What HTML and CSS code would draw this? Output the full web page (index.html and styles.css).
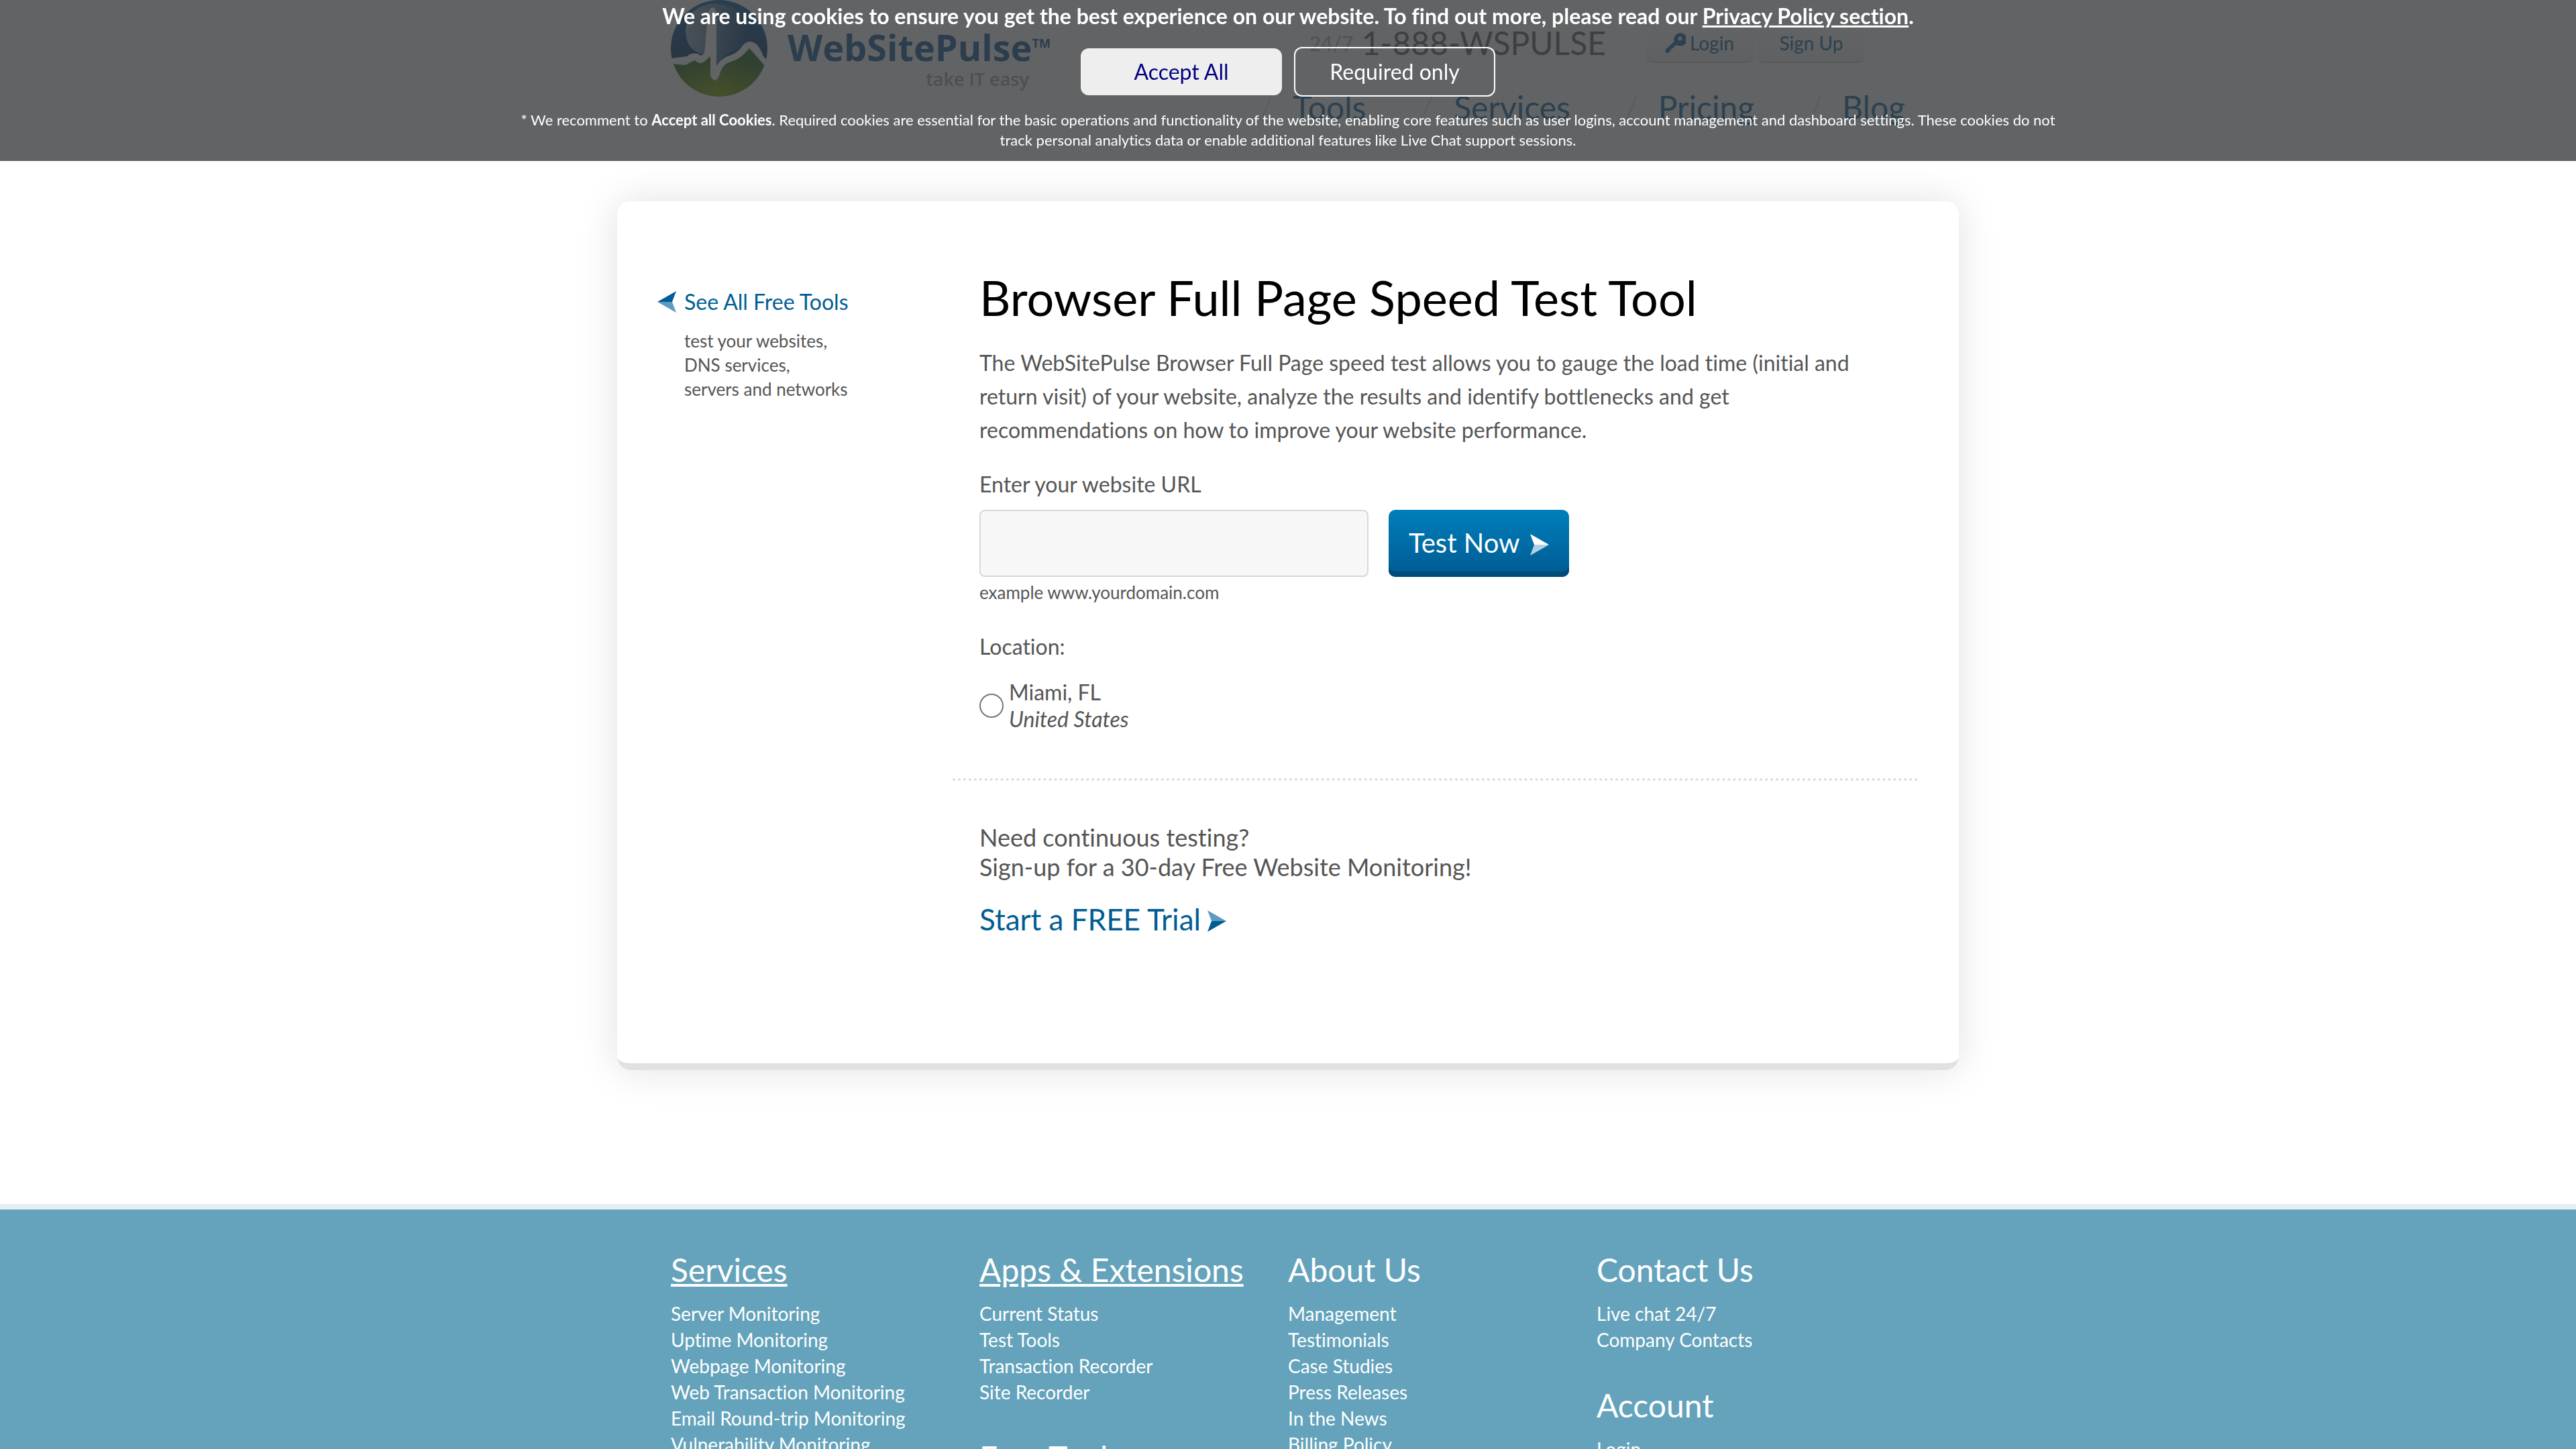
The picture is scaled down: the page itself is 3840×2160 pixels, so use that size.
FILE: index.html
```html
<!DOCTYPE html>
<html lang="en">
<head>
<meta charset="utf-8">
<title>Browser Full Page Speed Test Tool</title>
<link rel="stylesheet" href="styles.css">
</head>
<body>
<aside class="cookies" aria-label="Cookie notice">
  <p class="cookies-lead">We are using cookies to ensure you get the best experience on our website. To find out more, please read our <a href="#privacy">Privacy Policy section</a>.</p>
  <div class="cookies-actions">
    <button class="btn-accept" type="button">Accept All</button>
    <button class="btn-required" type="button">Required only</button>
  </div>
  <p class="cookies-note">* We recomment to <b>Accept all Cookies</b>. Required cookies are essential for the basic operations and functionality of the website, enabling core features such as user logins, account management and dashboard settings. These cookies do not track personal analytics data or enable additional features like Live Chat support sessions.</p>
</aside>

<header class="site-header">
  <a class="logo" href="#home">
    <svg class="logo-mark" viewBox="0 0 144 144" aria-hidden="true">
      <defs>
        <linearGradient id="sky" x1="0" y1="0" x2="0" y2="1"><stop offset="0" stop-color="#0a65a8"/><stop offset="1" stop-color="#0f3566"/></linearGradient>
        <linearGradient id="shine" x1="0" y1="0.1" x2="1" y2="0.3"><stop offset="0" stop-color="#a9bccb"/><stop offset="1" stop-color="#104c80"/></linearGradient>
        <radialGradient id="grass" cx="0.5" cy="0.9" r="0.7"><stop offset="0" stop-color="#84a800"/><stop offset="1" stop-color="#2c6a20"/></radialGradient>
        <clipPath id="disc"><circle cx="72" cy="72" r="72"/></clipPath>
      </defs>
      <g clip-path="url(#disc)">
        <path fill="url(#sky)" d="M0 0H144V90L138 84Q130 62 118 62Q110 62 104 72Q98 80 84 84Q74 88 68 98V20Q66 8 60 12Q54 16 54 30L50 78Q46 86 40 80Q30 78 24 84L0 87Z"/>
        <path fill="url(#shine)" d="M22 44Q26 8 66 5Q110 8 118 44Q112 66 98 74Q80 80 68 96V20Q66 8 60 12Q54 16 54 30L50 78Q46 84 40 78Q22 70 22 44Z"/>
        <path fill="url(#grass)" d="M0 95L22 97Q30 92 36 90Q44 98 52 90L59 84V112Q62 120 66 120Q70 119 73 110Q78 94 90 92Q104 88 117 72Q128 84 140 98V144H0Z"/>
      </g>
    </svg>
    <span class="logo-text"><span class="logo-name">WebSitePulse<sup>TM</sup></span><span class="logo-tag">take IT easy</span></span>
  </a>
  <div class="header-side">
    <div class="header-top">
      <p class="phone"><span class="phone-hours">24/7</span> 1-888-WSPULSE</p>
      <a class="account-link" href="#login"><svg class="key" viewBox="0 0 28 28" aria-hidden="true"><path d="M0 28V23L12 12A9 9 0 1 1 16 17L12 18L11 21L8 22L5 27Z"/><circle cx="20" cy="8" r="3" fill="#e4e4e4"/></svg>Login</a>
      <a class="account-link" href="#signup">Sign Up</a>
    </div>
    <nav class="main-nav">
      <a href="#tools">Tools</a><a href="#services">Services</a><a href="#pricing">Pricing</a><a href="#blog">Blog</a>
    </nav>
  </div>
</header>

<main class="card">
  <div class="side">
    <a class="back" href="#all-tools"><svg class="arrow" viewBox="0 0 28 32" aria-hidden="true"><path fill="#005d95" d="M0 16L28 0L22 16Z"/><path fill="#5f9dc0" d="M0 16L28 32L22 16Z"/></svg>See All Free Tools</a>
    <p class="side-note">test your websites,<br>DNS services,<br>servers and networks</p>
  </div>
  <div class="content">
    <form class="tool">
      <h1>Browser Full Page Speed Test Tool</h1>
      <p class="intro">The WebSitePulse Browser Full Page speed test allows you to gauge the load time (initial and return visit) of your website, analyze the results and identify bottlenecks and get recommendations on how to improve your website performance.</p>
      <label class="url-label" for="url">Enter your website URL</label>
      <div class="url-row">
        <input class="url" id="url" type="text">
        <button class="test" type="button">Test Now<svg class="arrow arrow-next" viewBox="0 0 28 32" aria-hidden="true"><path fill="#fff" d="M28 16L0 0L6 16Z"/><path fill="#b0d0e2" d="M28 16L0 32L6 16Z"/></svg></button>
      </div>
      <p class="hint">example www.yourdomain.com</p>
      <p class="location">Location:</p>
      <div class="place">
        <input class="radio" id="miami" type="radio" name="location">
        <label for="miami">Miami, FL<br><i>United States</i></label>
      </div>
    </form>
    <section class="trial">
      <p>Need continuous testing?<br>Sign-up for a 30-day Free Website Monitoring!</p>
      <a class="trial-link" href="#trial">Start a FREE Trial<svg class="arrow arrow-next" viewBox="0 0 28 32" aria-hidden="true"><path fill="#5f9dc0" d="M28 16L0 0L6 16Z"/><path fill="#005d95" d="M28 16L0 32L6 16Z"/></svg></a>
    </section>
  </div>
</main>

<footer class="site-footer">
  <div class="footer-cols">
    <div>
      <h2><a href="#services">Services</a></h2>
      <ul><li><a href="#s1">Server Monitoring</a></li><li><a href="#s2">Uptime Monitoring</a></li><li><a href="#s3">Webpage Monitoring</a></li><li><a href="#s4">Web Transaction Monitoring</a></li><li><a href="#s5">Email Round-trip Monitoring</a></li><li><a href="#s6">Vulnerability Monitoring</a></li></ul>
    </div>
    <div>
      <h2><a href="#apps">Apps &amp; Extensions</a></h2>
      <ul><li><a href="#a1">Current Status</a></li><li><a href="#a2">Test Tools</a></li><li><a href="#a3">Transaction Recorder</a></li><li><a href="#a4">Site Recorder</a></li></ul>
      <h2>Free Tools</h2>
    </div>
    <div>
      <h2>About Us</h2>
      <ul><li><a href="#u1">Management</a></li><li><a href="#u2">Testimonials</a></li><li><a href="#u3">Case Studies</a></li><li><a href="#u4">Press Releases</a></li><li><a href="#u5">In the News</a></li><li><a href="#u6">Billing Policy</a></li></ul>
    </div>
    <div>
      <h2>Contact Us</h2>
      <ul><li><a href="#c1">Live chat 24/7</a></li><li><a href="#c2">Company Contacts</a></li></ul>
      <h2>Account</h2>
      <ul><li><a href="#login">Login</a></li></ul>
    </div>
  </div>
</footer>
</body>
</html>
```

FILE: styles.css
```css
* { box-sizing: border-box; }
html { overflow: hidden; }
body { margin: 0; height: 100vh; overflow: hidden; background: #fff; color: #555; font: 32px/40px Lato, sans-serif; font-variant-ligatures: no-common-ligatures; }
p, h1, h2, ul { margin: 0; padding: 0; }
ul { list-style: none; }
a { color: #005d95; text-decoration: none; }
button { font: inherit; }

.cookies { position: fixed; z-index: 2; top: 0; left: 0; right: 0; padding: 4px 760px 16px; background: rgba(50, 52, 54, 0.77); color: #fff; text-align: center; }
.cookies-lead { font-weight: 700; }
.cookies-lead a { color: #fff; text-decoration: underline; }
.cookies-actions { display: flex; align-items: center; justify-content: center; gap: 18px; margin: 26px 0 20px; }
.cookies-actions button { width: 300px; border-radius: 12px; }
.btn-accept { height: 70px; border: 0; background: #eee; color: #000080; }
.btn-required { height: 74px; border: 2px solid #fff; background: transparent; color: #fff; }
.cookies-note { font-size: 22px; line-height: 30px; }

.site-header { display: flex; justify-content: space-between; width: 1840px; max-width: 100%; height: 240px; margin: 0 auto; }
.logo { display: flex; gap: 30px; height: 144px; }
.logo-mark { width: 144px; height: 144px; }
.logo-text { display: flex; flex-direction: column; align-items: flex-end; padding-top: 42px; color: #1a5a98; }
.logo-name { font: 700 54px/56px "Open Sans", sans-serif; }
.logo-name sup { font-size: 18px; line-height: 0; vertical-align: 20px; }
.logo-tag { padding-right: 32px; color: #aaa; font: 600 27px/40px "Open Sans", sans-serif; }
.header-top { display: flex; align-items: flex-start; justify-content: flex-end; gap: 6px; padding: 36px 60px 0 0; }
.phone { margin-right: 54px; font-size: 48px; line-height: 56px; color: #666; }
.phone-hours { color: #b4b4b4; font-size: 30px; vertical-align: 6px; }
.account-link { display: flex; align-items: center; justify-content: center; gap: 6px; width: 160px; height: 58px; border-bottom: 2px solid #d4d4d4; border-radius: 10px; background: linear-gradient(#fff, #f2f2f2); color: #1a6ea0; font-size: 28px; }
.key { width: 30px; height: 30px; fill: #1a6ea0; }
.main-nav { display: flex; justify-content: flex-end; gap: 80px; margin-top: 36px; }
.main-nav a { color: #1a6ea0; font-size: 48px; line-height: 60px; }
.main-nav a::before { content: "/"; margin-right: 30px; color: #d8d8d8; font-weight: 300; }

.card { display: flex; width: 2000px; max-width: 100%; margin: 60px auto 200px; padding: 98px 60px 190px; border-bottom: 10px solid #e1e1e1; border-radius: 20px; box-shadow: 0 0 60px rgba(0, 0, 0, 0.12); }
.side { width: 440px; padding-top: 32px; }
.back { display: flex; align-items: center; gap: 12px; }
.arrow { width: 28px; height: 32px; }
.arrow-next { margin-top: 6px; }
.side-note { padding: 20px 0 0 40px; font-size: 26px; line-height: 36px; }
.content { flex: 1; }
.tool { padding: 0 100px 68px 40px; border-bottom: 4px dotted #ddd; }
h1 { color: #000; font-weight: 400; font-size: 72px; line-height: 90px; }
.intro { padding: 28px 0 36px; line-height: 50px; }
.url-label { display: block; }
.url-row { display: flex; gap: 30px; padding: 18px 0 6px; }
.url { width: 580px; height: 100px; padding: 0 20px; border: 2px solid #d8d8d8; border-radius: 8px; background: #f7f7f7; color: inherit; font: inherit; }
.test { display: flex; align-items: center; gap: 16px; height: 100px; padding: 0 30px 2px; border: 0; border-radius: 10px; background: linear-gradient(#007fbb, #005d95 92%); box-shadow: inset 0 -8px #004b7a; color: #fff; font-size: 40px; }
.hint { font-size: 26px; line-height: 34px; }
.location { padding: 44px 0 28px; }
.place { display: flex; align-items: center; gap: 8px; }
.radio { width: 36px; height: 36px; margin: 0; appearance: none; border: 2px solid #767676; border-radius: 50%; }
.radio:checked { border-width: 10px; border-color: #005d95; }
.trial { padding: 62px 40px 0; font-size: 36px; line-height: 44px; }
.trial-link { display: inline-flex; align-items: center; gap: 10px; padding-top: 34px; font-size: 44px; }

.site-footer { border-top: 8px solid #e2eff5; background: #64a3bb; color: #fff; }
.footer-cols { display: grid; grid-template-columns: repeat(4, 1fr); width: 1840px; max-width: 100%; margin: 0 auto; padding-top: 60px; }
.footer-cols a { color: #fff; }
h2 { font-weight: 400; font-size: 48px; line-height: 60px; }
h2 a { text-decoration: underline; }
.footer-cols ul { padding: 16px 0 48px; font-size: 28px; line-height: 39px; }
```
